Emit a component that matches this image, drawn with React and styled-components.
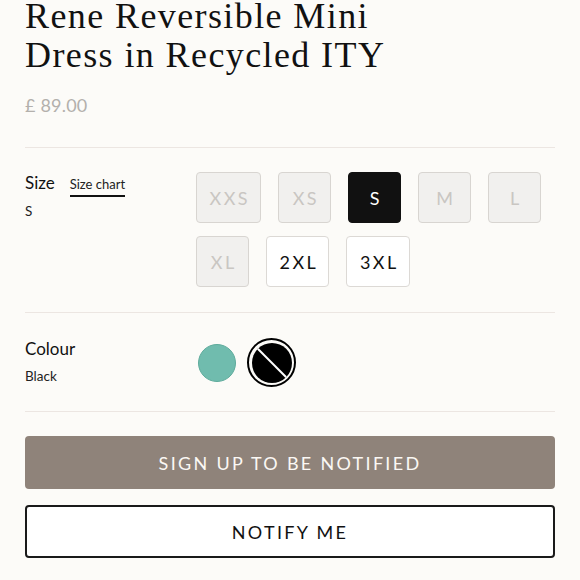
import React from "react";
import styled, { createGlobalStyle } from "styled-components";

const Global = createGlobalStyle`
  html, body { margin: 0; padding: 0; background: #fcfbf8; }
  body { font-family: "Lato", "Noto Sans", sans-serif; color: #111; }
  * { box-sizing: border-box; }
`;

const Page = styled.div`
  width: 580px;
  height: 580px;
  overflow: hidden;
  padding: 0 25px;
  background: #fcfbf8;
`;

const Title = styled.h1`
  margin: -3px 0 0;
  font-family: "Liberation Serif", "DejaVu Serif", serif;
  font-weight: 400;
  font-size: 36px;
  line-height: 39px;
  letter-spacing: 1.4px;
  color: #111;
`;

const Price = styled.div`
  margin-top: 19px;
  font-size: 18px;
  line-height: 22px;
  color: #b3b0ac;
  letter-spacing: 0.2px;
`;

const Divider = styled.hr`
  margin: 0;
  border: none;
  border-top: 1px solid #ece6e2;
`;

const FirstDivider = styled(Divider)`
  margin-top: 31px;
`;

const OptionRow = styled.div`
  display: flex;
  padding: ${(p) => p.$pad};
`;

const LabelCol = styled.div`
  width: 171px;
  flex: none;
`;

const LabelLine = styled.div`
  display: flex;
  align-items: baseline;
  gap: 15px;
`;

const OptionName = styled.div`
  font-size: 17px;
  line-height: 22px;
  color: #111;
`;

const SizeChart = styled.a`
  font-size: 13px;
  line-height: 16px;
  color: #222;
  text-decoration: none;
  border-bottom: 2px solid #111;
  padding-bottom: 3px;
`;

const Selected = styled.div`
  margin-top: ${(p) => p.$mt || 6}px;
  font-size: 13.5px;
  line-height: 16px;
  color: #222;
`;

const Chips = styled.div`
  flex: 1;
  display: flex;
  flex-wrap: wrap;
  gap: 13px 17px;
`;

const Chip = styled.button`
  height: 51px;
  min-width: 53px;
  padding: 0 10px 0 12.5px;
  border-radius: 4px;
  font-family: "Lato", "Noto Sans", sans-serif;
  font-size: 18px;
  letter-spacing: 2.5px;
  display: flex;
  align-items: center;
  justify-content: center;
  cursor: pointer;
  border: 1.5px solid
    ${(p) => (p.$state === "selected" ? "#111" : p.$state === "disabled" ? "#d8d5d1" : "#dcd9d5")};
  background: ${(p) => (p.$state === "selected" ? "#111" : p.$state === "disabled" ? "#f1f0ee" : "#fff")};
  color: ${(p) => (p.$state === "selected" ? "#fff" : p.$state === "disabled" ? "#c9c6c2" : "#111")};
`;

const Swatches = styled.div`
  display: flex;
  align-items: center;
  gap: 11px;
  margin-left: 2px;
`;

const Swatch = styled.div`
  width: 38px;
  height: 38px;
  border-radius: 50%;
  background: ${(p) => p.$color};
  border: 1px solid ${(p) => p.$edge};
`;

const SelectedRing = styled.div`
  width: 49px;
  height: 49px;
  border-radius: 50%;
  border: 2.5px solid #000;
  padding: 2.5px;
  display: flex;
`;

const SoldOutSwatch = styled.div`
  position: relative;
  flex: 1;
  border-radius: 50%;
  background: #000;
  overflow: hidden;
  &::after {
    content: "";
    position: absolute;
    left: 50%;
    top: 50%;
    width: 120%;
    height: 2px;
    background: #fff;
    transform: translate(-50%, -50%) rotate(45deg);
  }
`;

const Actions = styled.div`
  display: flex;
  flex-direction: column;
  gap: 16px;
  padding-top: 24px;
`;

const ActionButton = styled.button`
  height: 53px;
  width: 100%;
  border-radius: 4px;
  font-family: "Lato", "Noto Sans", sans-serif;
  font-size: 18px;
  letter-spacing: 2.3px;
  text-transform: uppercase;
  cursor: pointer;
  border: ${(p) => (p.$primary ? "none" : "2px solid #1a1a1a")};
  background: ${(p) => (p.$primary ? "#8f837a" : "#fff")};
  color: ${(p) => (p.$primary ? "#fbf8f4" : "#111")};
`;

const sizes = [
  { label: "XXS", state: "disabled" },
  { label: "XS", state: "disabled" },
  { label: "S", state: "selected" },
  { label: "M", state: "disabled" },
  { label: "L", state: "disabled" },
  { label: "XL", state: "disabled" },
  { label: "2XL", state: "available" },
  { label: "3XL", state: "available" },
];

export default function App() {
  return (
    <Page>
      <Global />
      <Title>
        Rene Reversible Mini
        <br />
        Dress in Recycled ITY
      </Title>
      <Price>£ 89.00</Price>
      <FirstDivider />
      <OptionRow $pad="24px 0 25px">
        <LabelCol>
          <LabelLine>
            <OptionName>Size</OptionName>
            <SizeChart href="#">Size chart</SizeChart>
          </LabelLine>
          <Selected $mt={6}>S</Selected>
        </LabelCol>
        <Chips>
          {sizes.map((s) => (
            <Chip key={s.label} $state={s.state}>
              {s.label}
            </Chip>
          ))}
        </Chips>
      </OptionRow>
      <Divider />
      <OptionRow $pad="25px 0 24px">
        <LabelCol>
          <OptionName>Colour</OptionName>
          <Selected $mt={8}>Black</Selected>
        </LabelCol>
        <Swatches>
          <Swatch $color="#70bcae" $edge="#5eab9c" />
          <SelectedRing>
            <SoldOutSwatch />
          </SelectedRing>
        </Swatches>
      </OptionRow>
      <Divider />
      <Actions>
        <ActionButton $primary>Sign up to be notified</ActionButton>
        <ActionButton>Notify me</ActionButton>
      </Actions>
    </Page>
  );
}
